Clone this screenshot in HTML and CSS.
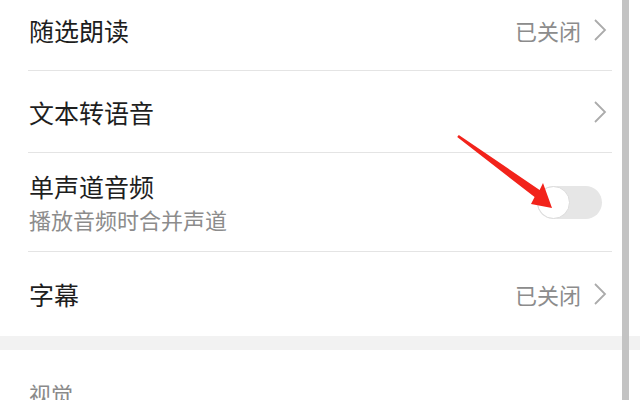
FILE: index.html
```html
<!DOCTYPE html>
<html lang="zh-CN">
<head>
    <meta charset="UTF-8">
    <meta name="viewport" content="width=device-width, initial-scale=1.0">
    <title>辅助功能</title>
    <link rel="stylesheet" href="styles.css">
</head>
<body>

<div class="screen">
    <!-- Settings list -->
    <div class="group first">
        <div class="row">
            <span class="title">随选朗读</span>
            <span class="value">已关闭</span>
            <svg class="chevron" viewBox="0 0 14 24"><polyline points="2,2 12,12 2,22"/></svg>
        </div>
        <div class="row">
            <span class="title">文本转语音</span>
            <span class="value"></span>
            <svg class="chevron" viewBox="0 0 14 24"><polyline points="2,2 12,12 2,22"/></svg>
        </div>
        <div class="row tall">
            <div class="text">
                <span class="title">单声道音频</span>
                <span class="sub">播放音频时合并声道</span>
            </div>
            <div class="switch"><div class="knob"></div></div>
        </div>
        <div class="row last">
            <span class="title">字幕</span>
            <span class="value">已关闭</span>
            <svg class="chevron" viewBox="0 0 14 24"><polyline points="2,2 12,12 2,22"/></svg>
        </div>
    </div>

    <div class="gap"></div>

    <div class="section-head">视觉</div>

    <!-- scrollbar -->
    <div class="scrollbar"></div>

    <!-- red annotation arrow -->
    <svg class="arrow" viewBox="0 0 640 400">
        <polygon points="458.8,135 539.6,190 543,183 552,208 531,204 534.6,197 457.2,137"/>
    </svg>
</div>

</body>
</html>
```

FILE: styles.css
```css
body {
    margin: 0;
    background: #fff;
    font-family: "Noto Sans CJK SC", "Noto Sans", sans-serif;
}
.screen {
    position: relative;
    width: 640px;
    height: 400px;
    overflow: hidden;
}
.group.first {
    margin-top: -11px;
}
.row {
    display: flex;
    align-items: center;
    height: 81px;
    margin: 0 28px;
    padding-left: 1px;
    border-bottom: 1px solid #e4e4e4;
}
.row.tall {
    height: 98px;
}
.row.last {
    height: 84px;
    border-bottom: none;
}
.title {
    font-size: 25px;
    color: #1e1e1e;
    flex: 1;
}
.text {
    flex: 1;
    display: flex;
    flex-direction: column;
}
.text .title {
    line-height: 34px;
}
.sub {
    font-size: 22px;
    line-height: 32px;
    color: #8c8c8c;
}
.value {
    font-size: 22px;
    color: #8c8c8c;
    margin-right: 12px;
}
.chevron {
    width: 14px;
    height: 24px;
    margin-right: 5px;
    fill: none;
    stroke: #ababab;
    stroke-width: 1.8;
}
.switch {
    width: 65px;
    height: 33px;
    border-radius: 17px;
    background: #e6e6e6;
    margin-right: 10px;
    position: relative;
}
.knob {
    position: absolute;
    left: 0;
    top: 0;
    width: 31px;
    height: 31px;
    border-radius: 50%;
    background: #fff;
    border: 1px solid #dcdcdc;
}
.gap {
    height: 14px;
    background: #f2f2f2;
}
.section-head {
    padding: 28px 0 0 29px;
    font-size: 22px;
    line-height: 30px;
    color: #8a8a8a;
}
.scrollbar {
    position: absolute;
    top: 0;
    right: 11px;
    width: 7px;
    height: 400px;
    background: #c3c3c3;
}
.arrow {
    position: absolute;
    left: 0;
    top: 0;
    width: 640px;
    height: 400px;
    fill: #f2231b;
    pointer-events: none;
}
```
